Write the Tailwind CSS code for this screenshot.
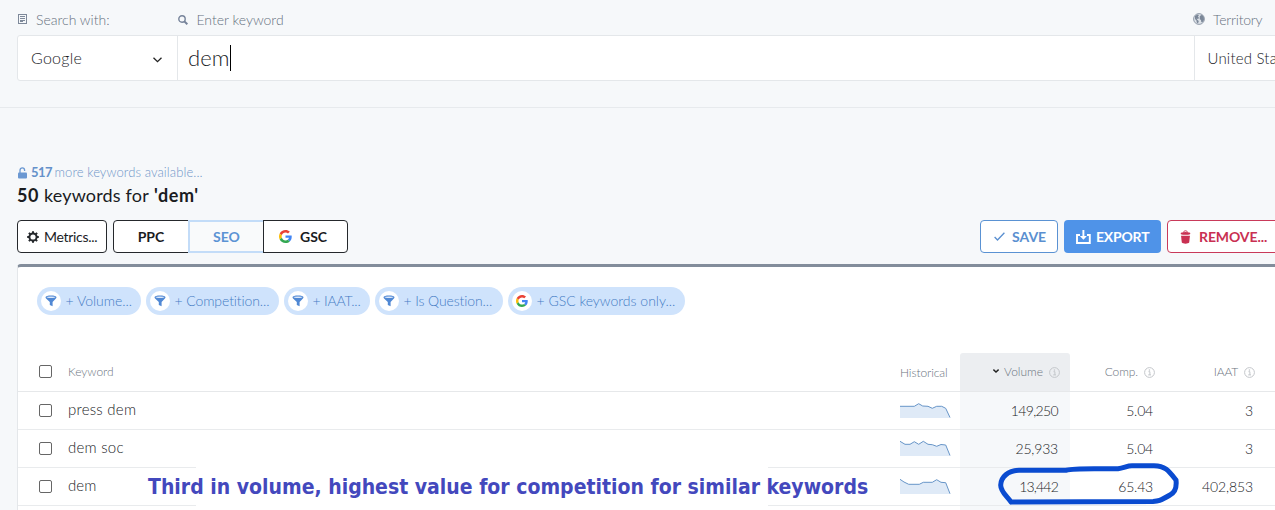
<!DOCTYPE html>
<html lang="en">
<head>
<meta charset="utf-8">
<title>Keyword research</title>
<script src="https://cdn.jsdelivr.net/npm/@tailwindcss/browser@4"></script>
</head>
<body class="relative h-[510px] w-[1275px] overflow-hidden bg-[#f6f8fa] font-['Lato','Liberation_Sans',sans-serif] text-sm font-light whitespace-nowrap text-[#1a1c1f]">
<svg class="hidden">
  <symbol id="g" viewBox="0 0 48 48"><path fill="#ea4335" d="M24 9.5c3.54 0 6.71 1.22 9.21 3.6l6.85-6.85C35.9 2.38 30.47 0 24 0 14.62 0 6.51 5.38 2.56 13.22l7.98 6.19C12.43 13.72 17.74 9.5 24 9.5z"/><path fill="#4285f4" d="M46.98 24.55c0-1.57-.15-3.09-.38-4.55H24v9.02h12.94c-.58 2.96-2.26 5.48-4.78 7.18l7.73 6c4.51-4.18 7.09-10.36 7.09-17.65z"/><path fill="#fbbc05" d="M10.53 28.59c-.48-1.45-.76-2.99-.76-4.59s.27-3.14.76-4.59l-7.98-6.19C.92 16.46 0 20.12 0 24s.92 7.54 2.56 10.78l7.97-6.19z"/><path fill="#34a853" d="M24 48c6.48 0 11.93-2.13 15.89-5.81l-7.73-6c-2.15 1.45-4.92 2.3-8.16 2.3-6.26 0-11.57-4.22-13.47-9.91l-7.98 6.19C6.51 42.62 14.62 48 24 48z"/></symbol>
  <symbol id="funnel" viewBox="0 0 12 12"><path fill="#5088d4" d="M.5 2.2C.5 1.2 3 .6 6 .6s5.500.6 5.500 1.600c0 .6-.3 1-.8 1.500L7.600 7v4.200L4.800 10V7L1.300 3.700C.8 3.200.5 2.800.5 2.200z"/><ellipse cx="6" cy="2.200" rx="4.300" ry=".7" fill="#dbe8fa"/></symbol>
  <symbol id="info" viewBox="0 0 11 11"><circle cx="5.500" cy="5.500" r="4.900" fill="none" stroke="#c3c6ca"/><path d="M4.500 4.700h1.400v3.200M4.200 7.900h2.800" fill="none" stroke="#c3c6ca"/><rect x="4.800" y="2.400" width="1.300" height="1.300" fill="#c3c6ca"/></symbol>
</svg>

<header class="h-[108px] border-b border-[#e7eaed] pl-[17px]">
  <div class="flex h-[35px] pt-[10px] leading-5 text-[#667180]">
    <div class="flex w-[160px]">
      <svg class="mt-1 mr-[9px] ml-px h-[10px] w-[9px]" viewBox="0 0 9 10" fill="none" stroke="#7e899a"><rect x=".5" y=".5" width="8" height="9"/><path d="M2 2.500h5M2 4.500h5M2 6.500h5M2 7.500h3"/></svg>
      <span>Search with:</span>
    </div>
    <div class="flex w-[1016px]">
      <svg class="mt-[5px] mr-[8.500px] ml-px h-[10px] w-[10px]" viewBox="0 0 10 10" fill="none" stroke="#76839a"><circle cx="4" cy="4" r="3.200" stroke-width="1.400"/><path d="M6.400 6.400 9.300 9.300" stroke-width="2"/></svg>
      <span>Enter keyword</span>
    </div>
    <svg class="mt-[3px] mr-[8px] h-[12px] w-[12px]" viewBox="0 0 12 12"><circle cx="6" cy="6" r="5.400" fill="#dde2e8" stroke="#8993a3" stroke-width=".9"/><path fill="#7b8798" d="M2 3 4.500 1.500 6 2 5 3.500 6 5 5 6 3.500 5.500 4.500 7 5.800 8 5 10.500 3.700 9.500 3.500 7.500 2 6zM6.800 3 9 1.800 10.800 4 11 7 9.600 9 8.300 9.200 8 7 6.700 6.300z"/></svg>
    <span class="tracking-[-0.2px]">Territory</span>
  </div>
  <div class="flex h-[46px] w-[1300px] items-center rounded-[3px] border border-[#e4e7ea] bg-white text-[16px]">
    <div class="flex h-full w-[160px] items-center justify-between border-r border-[#e4e7ea] pr-[15px] pl-[13px]">
      <span class="tracking-[0.25px]">Google</span>
      <svg class="mt-1 h-[6px] w-[9px]" viewBox="0 0 9 6" fill="none" stroke="#222" stroke-width="1.300"><path d="M.5.7 4.500 4.700 8.500.7"/></svg>
    </div>
    <div class="flex h-full w-[1017px] items-center border-r border-[#e4e7ea] pl-[10px]">
      <span class="text-[22px] leading-none tracking-[0.1px]">dem</span><span class="h-[26px] w-px bg-black"></span>
    </div>
    <span class="pt-[2px] pl-[12.500px] text-[15px] tracking-[0.2px]">United States</span>
  </div>
</header>

<section class="pl-[17px]">
  <div class="flex h-[76px] items-end pb-[3px] text-[13px] leading-[18px] text-[#6f96c8]">
    <svg class="mr-[4px] mb-[2px] ml-px h-[12px] w-[9px]" viewBox="0 0 9 12"><path d="M2 6V3.200a2.300 2.300 0 0 1 4.600 0V4" fill="none" stroke="#6b98d2" stroke-width="1.300"/><rect y="5.500" width="9" height="6" rx="1" fill="#6b98d2"/></svg>
    <span class="mr-[3.500px] w-[20px] font-bold tracking-[-0.6px] text-[#6491ca]">517</span><span class="tracking-[0.1px]">more keywords available...</span>
  </div>
  <h1 class="flex h-[22px] items-center pt-px text-[18px] font-normal"><b class="w-[27px] tracking-[0.5px]">50</b><span class="w-[110px] tracking-[0.17px]">keywords for</span><b class="tracking-[0.6px]">'dem'</b></h1>
  <div class="mt-[14px] flex h-[33px]">
    <div class="mr-[6px] flex w-[90px] shrink-0 items-center rounded-[4px] border border-[#25282c] bg-white pl-[9px] font-normal">
      <svg class="mr-[5px] h-3 w-3" viewBox="0 0 12 12" fill="none" stroke="#25282c"><circle cx="6" cy="6" r="3.600" stroke-width="2"/><path stroke-width="2" d="M6 .2v2M6 9.800v2M.2 6h2M9.800 6h2M1.900 1.900l1.400 1.400M8.700 8.700l1.400 1.400M1.900 10.100l1.400-1.400M8.700 3.300l1.400-1.400"/></svg>
      <span class="tracking-[-0.3px]">Metrics...</span>
    </div>
    <div class="flex w-[235px] shrink-0 rounded-[4px] border border-[#25282c] bg-white font-bold">
      <div class="flex w-[74px] items-center justify-center">PPC</div>
      <div class="-my-px flex w-[75px] items-center justify-center border-2 border-r-0 border-[#c3dcf8] bg-[#f9fafb] text-[#5c93d4]">SEO</div>
      <div class="flex flex-1 items-center border-l border-[#25282c] pl-[15px]"><svg class="mr-[8px] h-[13px] w-[13px]"><use href="#g"/></svg>GSC</div>
    </div>
    <div class="ml-[632px] flex shrink-0 font-bold">
      <div class="mr-[6px] flex w-[78px] items-center rounded-[4px] border border-[#5a92d3] bg-white pl-[13px] text-[#5a8fd0]">
        <svg class="mr-[7px] h-[9px] w-[11px]" viewBox="0 0 11 9" fill="none" stroke="#5a8fd0" stroke-width="1.300"><path d="M.6 5 3.500 8 10.400.7"/></svg>SAVE</div>
      <div class="mr-[6px] flex w-[97px] items-center rounded-[4px] bg-[#4f93e8] pl-[12px] tracking-[-0.2px] text-white">
        <svg class="mr-[5px] h-[14px] w-[15px]" viewBox="0 0 15 14" fill="none" stroke="#fff" stroke-width="1.900"><path d="M4 5H1v8h12.800V5H11M7.400 0v8"/><path fill="#fff" stroke="none" d="M3.900 6h7L7.400 9.800z"/></svg>EXPORT</div>
      <div class="flex w-[130px] items-center rounded-[4px] border border-[#c93a5a] bg-white pl-[12px] tracking-[-0.1px] text-[#c93052]">
        <svg class="mr-[8px] h-[14px] w-[11px]" viewBox="0 0 11 14"><path fill="#c93052" d="M1 5.400h9l-.8 7.200c-1 1.500-6.400 1.500-7.400 0z"/><ellipse cx="5.500" cy="3.600" rx="4.800" ry="1.500" fill="#c93052"/><path d="M3.500 2.500C3.700.2 7.300.2 7.500 2.500" stroke="#c93052" fill="none"/><path d="M1 5.200h9" stroke="#fff" stroke-width=".7"/></svg>REMOVE...</div>
    </div>
  </div>
</section>

<main class="mt-[11px] ml-[17px] h-[250px] w-[1300px] rounded-tl-[4px] border-t-3 border-l border-t-[#838d9b] border-l-[#e4e7ea] bg-white">
  <div class="flex h-[86px] gap-[5px] pt-[20px] pl-[19px] text-[#457cc4]">
    <div class="flex h-7 w-[104px] items-center rounded-full bg-[#cfe3fc] pl-[4px]"><span class="mr-[4.500px] flex size-5 items-center justify-center rounded-full bg-white"><svg class="size-3"><use href="#funnel"/></svg></span><span class="pb-px">+ Volume...</span></div>
    <div class="flex h-7 w-[133px] items-center rounded-full bg-[#cfe3fc] pl-[4px]"><span class="mr-[4.500px] flex size-5 items-center justify-center rounded-full bg-white"><svg class="size-3"><use href="#funnel"/></svg></span><span class="pb-px tracking-[-0.1px]">+ Competition...</span></div>
    <div class="flex h-7 w-[86px] items-center rounded-full bg-[#cfe3fc] pl-[4px]"><span class="mr-[4.500px] flex size-5 items-center justify-center rounded-full bg-white"><svg class="size-3"><use href="#funnel"/></svg></span><span class="pb-px tracking-[-0.2px]">+ IAAT...</span></div>
    <div class="flex h-7 w-[128px] items-center rounded-full bg-[#cfe3fc] pl-[4px]"><span class="mr-[4.500px] flex size-5 items-center justify-center rounded-full bg-white"><svg class="size-3"><use href="#funnel"/></svg></span><span class="pb-px tracking-[-0.1px]">+ Is Question...</span></div>
    <div class="flex h-7 w-[177px] items-center rounded-full bg-[#cfe3fc] pl-[4px]"><span class="mr-[4.500px] flex size-5 items-center justify-center rounded-full bg-white"><svg class="size-3"><use href="#g"/></svg></span><span class="pb-px">+ GSC keywords only...</span></div>
  </div>

  <div class="flex h-[39px] items-stretch border-b border-[#e6e8ea] text-[12px] text-[#6b7480]">
    <div class="flex w-[882px] items-center pl-[21px]"><span class="mr-4 mb-[2px] size-[13px] rounded-[2px] border border-[#666] bg-white"></span>Keyword</div>
    <div class="flex w-[60px] items-center pt-[2px]"><span class="tracking-[-0.1px]">Historical</span></div>
    <div class="flex w-[110px] items-center justify-end rounded-t-[3px] bg-[#eceef1] pr-[10px]"><svg class="mr-[5px] mb-[2px] h-[4px] w-[6px]" viewBox="0 0 6 4" fill="none" stroke="#222" stroke-width="1.400"><path d="M.4.6 3 3 5.600.6"/></svg>Volume<svg class="ml-[6px] size-[11px]"><use href="#info"/></svg></div>
    <div class="flex w-[85px] items-center justify-end"><span class="tracking-[-0.1px]">Comp.</span><svg class="ml-[6px] size-[11px]"><use href="#info"/></svg></div>
    <div class="flex w-[100px] items-center justify-end"><span class="tracking-[-0.2px]">IAAT</span><svg class="ml-[6px] size-[11px]"><use href="#info"/></svg></div>
  </div>

  <div class="flex h-[38px] items-stretch border-b border-[#e9ebed]">
    <div class="flex w-[882px] items-center pl-[21px]"><span class="mr-4 size-[13px] rounded-[2px] border border-[#666]"></span><span class="pb-px text-[15px] tracking-[0.25px]">press dem</span></div>
    <svg class="h-[37px] w-[60px]"><path fill="#dfeaf7" d="M0 26V14.300H14.300L18.700 11.700 22.700 14 28 14.300 32.300 16.300 36.700 14.300H41.700L45.700 16.300 50 26z"/><path fill="none" stroke="#6795c8" d="M0 14.300H14.300L18.700 11.700 22.700 14 28 14.300 32.300 16.300 36.700 14.300H41.700L45.700 16.300 50 25.500"/></svg>
    <div class="flex w-[110px] items-center justify-end bg-[#f6f8fa] pr-[12px] tracking-[-0.65px]">149,250</div>
    <div class="flex w-[83px] items-center justify-end tracking-[-0.2px]">5.04</div>
    <div class="flex w-[100px] items-center justify-end">3</div>
  </div>
  <div class="flex h-[38px] items-stretch border-b border-[#e9ebed]">
    <div class="flex w-[882px] items-center pl-[21px]"><span class="mr-4 size-[13px] rounded-[2px] border border-[#666]"></span><span class="pb-px text-[15px] tracking-[0.25px]">dem soc</span></div>
    <svg class="h-[37px] w-[60px]"><path fill="#dfeaf7" d="M0 26V11.300L5 14.300H10L14.300 11.700 18.700 14.300 23.300 11.300 28 14.300 32.300 14.700 36.700 16.300 41 14.500 45.700 15 50 26z"/><path fill="none" stroke="#6795c8" d="M0 11.300 5 14.300H10L14.300 11.700 18.700 14.300 23.300 11.300 28 14.300 32.300 14.700 36.700 16.300 41 14.500 45.700 15 50 25.500"/></svg>
    <div class="flex w-[110px] items-center justify-end bg-[#f6f8fa] pr-[12px] tracking-[-0.2px]">25,933</div>
    <div class="flex w-[83px] items-center justify-end tracking-[-0.2px]">5.04</div>
    <div class="flex w-[100px] items-center justify-end">3</div>
  </div>
  <div class="flex h-[38px] items-stretch border-b border-[#e9ebed]">
    <div class="flex w-[882px] items-center pl-[21px]"><span class="mr-4 size-[13px] rounded-[2px] border border-[#666]"></span><span class="pb-px text-[15px] tracking-[0.1px]">dem</span></div>
    <svg class="h-[37px] w-[60px]"><path fill="#dfeaf7" d="M0 26V11.300L4 14 8.700 16.300H19.300L23.300 14.300H32.300L36.700 11.700 41 14.300 45.700 14.700 50 26z"/><path fill="none" stroke="#6795c8" d="M0 11.300 4 14 8.700 16.300H19.300L23.300 14.300H32.300L36.700 11.700 41 14.300 45.700 14.700 50 25.700"/></svg>
    <div class="flex w-[110px] items-center justify-end bg-[#f6f8fa] pr-[12px] tracking-[-0.8px]">13,442</div>
    <div class="flex w-[83px] items-center justify-end tracking-[-0.2px]">65.43</div>
    <div class="flex w-[100px] items-center justify-end tracking-[-0.1px]">402,853</div>
  </div>
  <div class="flex h-[10px]"><div class="ml-[942px] w-[110px] bg-[#f6f8fa]"></div></div>
</main>

<!-- Annotation: caption and hand-drawn ring -->
<div class="absolute top-[466px] left-[196px] h-[44px] w-[572px] bg-white"></div>
<div class="absolute top-[474px] left-[148px] font-['DejaVu_Sans_Condensed','DejaVu_Sans',sans-serif] text-[21px] leading-[26px] font-bold [font-stretch:condensed] text-[#4348bd]">Third in volume, highest value for competition for similar keywords</div>
<svg class="absolute top-[455px] left-[990px] h-[55px] w-[200px]" viewBox="990 455 200 55" fill="none" stroke="#0a4bd0" stroke-width="5" stroke-linecap="round" stroke-linejoin="round"><path d="M1011 502C1008 497 1000.500 492 1000.700 485 1001 477 1008 470.500 1019 470.300H1066C1074 468.300 1080 469 1118 468.700 1124 468 1127 465.700 1132 465.700H1154C1165 466 1168 470 1176 480 1177 489 1174 493 1170 495 1160 501 1158 501.300 1153 501.500L1011 502"/></svg>
</body>
</html>
